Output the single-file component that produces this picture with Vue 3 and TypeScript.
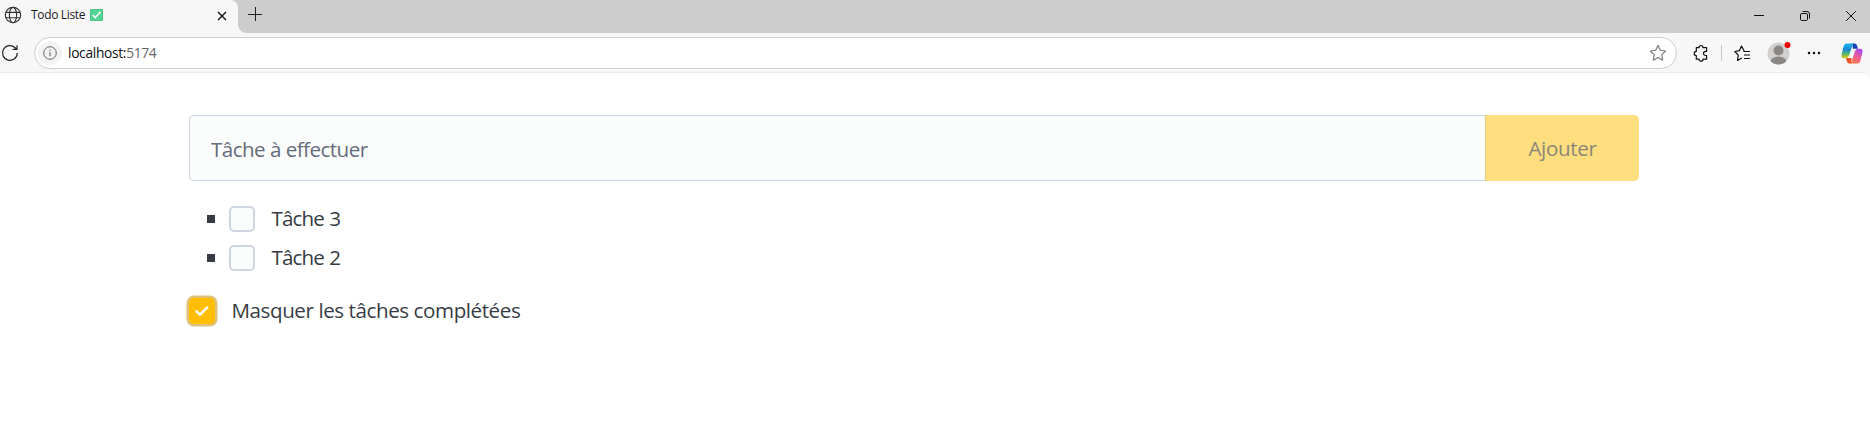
<script setup lang="ts">
import { computed, ref } from 'vue'

interface Todo {
  id: number
  title: string
  completed: boolean
}

const newTodo = ref('')
const hideCompleted = ref(true)
const todos = ref<Todo[]>([
  { id: 3, title: 'Tâche 3', completed: false },
  { id: 2, title: 'Tâche 2', completed: false },
  { id: 1, title: 'Tâche 1', completed: true },
])

const visibleTodos = computed(() =>
  hideCompleted.value ? todos.value.filter((t) => !t.completed) : todos.value,
)

function addTodo() {
  const title = newTodo.value.trim()
  if (!title) return
  todos.value.unshift({ id: Date.now(), title, completed: false })
  newTodo.value = ''
}
</script>

<template>
  <div class="browser">
    <header class="tabstrip">
      <div class="tab">
        <svg class="globe" width="18" height="18" viewBox="0 0 18 18" fill="none" stroke="#333" stroke-width="1.15">
          <circle cx="9" cy="9" r="7.7" />
          <ellipse cx="9" cy="9" rx="3.6" ry="7.7" />
          <path d="M2 6.3h14M2 11.7h14" />
        </svg>
        <span class="tab-title">Todo Liste</span>
        <svg class="tab-emoji" width="13" height="12" viewBox="0 0 13 12">
          <rect width="13" height="12" rx="1" fill="#49c586" />
          <rect x="1" y="1" width="11" height="10" fill="#55d394" />
          <path d="M2.8 6l2.5 2.7 5-5.6" fill="none" stroke="#fff" stroke-width="1.5" />
        </svg>
        <svg class="tab-close" width="10" height="10" viewBox="0 0 10 10" stroke="#111" stroke-width="1.4">
          <path d="M1 1l8 8M9 1L1 9" />
        </svg>
      </div>
      <div class="tab-curve"></div>
      <svg class="new-tab" width="14" height="14" viewBox="0 0 14 14" stroke="#222" stroke-width="1">
        <path d="M7.5 0v14M0 7.5h14" />
      </svg>
      <div class="window-buttons">
        <svg width="12" height="12" viewBox="0 0 12 12" fill="none" stroke="#111"><path d="M1 5.5h10" /></svg>
        <svg width="12" height="12" viewBox="0 0 12 12" fill="none" stroke="#111">
          <rect x="1.5" y="3.5" width="7" height="7" rx="1.3" />
          <path d="M3.5 1.5H8a2.5 2.5 0 0 1 2.500 2.500V8.500" />
        </svg>
        <svg width="12" height="12" viewBox="0 0 12 12" fill="none" stroke="#111"><path d="M1.200 1.200l9.600 9.600M10.800 1.200l-9.600 9.600" /></svg>
      </div>
    </header>

    <nav class="toolbar">
      <svg class="reload" width="18" height="18" viewBox="0 0 18 18" fill="none" stroke="#222" stroke-width="1.2">
        <path d="M16.300 9a7.400 7.400 0 1 1-2.200-5.300L16 5.400M16 1.200v4.200h-4.300" />
      </svg>
      <div class="address">
        <span class="info">
          <svg width="14" height="14" viewBox="0 0 14 14" fill="none" stroke="#666">
            <circle cx="7" cy="7" r="6.300" />
            <path d="M7 6v4.200M7 3.700v1.300" stroke-width="1.100" />
          </svg>
        </span>
        <span class="url">localhost:<span class="port">5174</span></span>
        <svg class="star" width="18" height="18" viewBox="0 0 18 18" fill="none" stroke="#777" stroke-width="1.100" stroke-linejoin="round">
          <path d="M9 1.300l2.300 5 5.400.7-4 3.700 1 5.500L9 13.500l-4.700 2.700 1-5.500-4-3.700 5.400-.7z" />
        </svg>
      </div>
      <svg class="puzzle" width="16" height="17" viewBox="0 0 16 17" fill="none" stroke="#111" stroke-width="1.200" stroke-linejoin="round">
        <path d="M3.300 2.700H6a2 2 0 0 1 4 0h3.600v3.600h-1a2.100 2.100 0 0 0 0 4.200h1v3.700H10a2 2 0 0 1-4 0H3.300v-3.600a2.100 2.100 0 0 1 0-4.200z" />
      </svg>
      <span class="divider"></span>
      <svg class="favorites" width="17" height="17" viewBox="0 0 17 17" fill="none" stroke="#111" stroke-width="1.200" stroke-linejoin="round">
        <path d="M10.300 6.200L7.500 1.100l-2 4.500L.8 6.500l3.500 3.700-.8 5.300 4.300-2.400" />
        <path d="M9.500 6.500H16M10 10h6M10 13.500h6" />
      </svg>
      <svg class="avatar" width="24" height="24" viewBox="0 0 24 24">
        <defs><clipPath id="avatar-clip"><circle cx="11.500" cy="12.500" r="11" /></clipPath></defs>
        <circle cx="11.500" cy="12.500" r="11" fill="#d2d0ce" />
        <g clip-path="url(#avatar-clip)" fill="#8a8886">
          <circle cx="11.500" cy="9.500" r="5" />
          <ellipse cx="11.500" cy="21" rx="8" ry="5.500" />
        </g>
        <circle cx="20.500" cy="4" r="3" fill="#e60000" />
      </svg>
      <svg class="more" width="14" height="4" viewBox="0 0 14 4" fill="#111">
        <circle cx="2" cy="2" r="1.250" /><circle cx="7" cy="2" r="1.250" /><circle cx="12" cy="2" r="1.250" />
      </svg>
      <svg class="copilot" width="22" height="21" viewBox="0 0 22 21">
        <defs>
          <linearGradient id="cp-left" x1="0" y1="0" x2="0" y2="1">
            <stop offset="0" stop-color="#19b5ee" /><stop offset=".4" stop-color="#1687dc" />
            <stop offset=".7" stop-color="#55b66d" /><stop offset="1" stop-color="#e9cb14" />
          </linearGradient>
          <linearGradient id="cp-right" x1=".8" y1="0" x2=".3" y2="1">
            <stop offset="0" stop-color="#a34af0" /><stop offset=".5" stop-color="#ec5a9b" />
            <stop offset="1" stop-color="#ff7f48" />
          </linearGradient>
        </defs>
        <path d="M11 .5h2.600q1.800 0 2.300 1.700l1.100 3.600h-5z" fill="#1741b8" />
        <path d="M10.500 20.500H8.300q-1.700 0-2.200-1.700l-1.200-3.700h5.500z" fill="#f05225" />
        <path d="M5.300.5h8q-1.400.4-2 2.300L8 12.800q-.8 2.400-3 2.400H2.800Q0 15.200.5 12L2.700 3Q3.500.5 5.300.5z" fill="url(#cp-left)" />
        <path d="M16.700 20.500h-8q1.400-.4 2-2.300L14 8.200q.8-2.400 3-2.400h2.200Q22 5.800 21.500 9l-2.200 9q-.8 2.500-2.600 2.500z" fill="url(#cp-right)" />
      </svg>
    </nav>

    <div class="viewport">
      <main class="container">
        <form class="group" @submit.prevent="addTodo">
          <input v-model="newTodo" class="field" type="text" placeholder="Tâche à effectuer" />
          <button class="submit" :disabled="!newTodo">Ajouter</button>
        </form>
        <ul class="todos">
          <li v-for="todo in visibleTodos" :key="todo.id">
            <label>
              <input v-model="todo.completed" class="check" type="checkbox" />
              <span class="task-text">{{ todo.title }}</span>
            </label>
          </li>
        </ul>
        <label class="hide">
          <span class="check-wrap">
            <input v-model="hideCompleted" class="check focused" type="checkbox" />
            <svg v-if="hideCompleted" class="mark" width="14" height="12" viewBox="0 0 14 12" fill="none" stroke="#fff" stroke-width="2.400" stroke-linecap="round" stroke-linejoin="round">
              <path d="M1.500 6.300l3.500 3.400 7.300-7.300" />
            </svg>
          </span>
          <span class="hide-text">Masquer les tâches complétées</span>
        </label>
      </main>
    </div>
  </div>
</template>

<style>
body {
  margin: 0;
  background: #f7f7f7;
}
</style>

<style scoped>
* {
  box-sizing: border-box;
}
svg {
  display: block;
  flex: none;
}
.browser {
  width: 100%;
  height: 443px;
  overflow: hidden;
  display: flex;
  flex-direction: column;
  background: #f7f7f7;
  font-family: "Open Sans", "Noto Sans", sans-serif;
  color: #373c44;
}
.tabstrip {
  height: 33px;
  flex: none;
  display: flex;
  background: #cdcdcd;
}
.tab {
  width: 238px;
  height: 33px;
  padding: 0 11px 3px 4px;
  display: flex;
  align-items: center;
  background: #f7f7f7;
  border-radius: 0 8px 0 0;
}
.tab-title {
  margin-left: 9px;
  width: 54px;
  font-size: 12px;
  letter-spacing: -0.34px;
  line-height: 16px;
  white-space: nowrap;
  color: #1b1b1b;
}
.tab-emoji {
  margin-left: 5px;
}
.tab-close {
  margin: 1px 0 0 auto;
}
.tab-curve {
  width: 8px;
  height: 8px;
  align-self: flex-end;
  background: radial-gradient(circle at 100% 0, #cdcdcd 7.500px, #f7f7f7 8px);
}
.new-tab {
  margin: 7px 0 0 2px;
}
.window-buttons {
  margin: 10px 13px 0 auto;
  display: flex;
  gap: 34px;
}
.toolbar {
  height: 39px;
  flex: none;
  display: flex;
  align-items: center;
  padding: 1px 7px 0 1px;
}
.address {
  flex: none;
  width: 1643px;
  height: 32px;
  margin: 0 16px 0 15px;
  padding: 0 9px 0 3px;
  display: flex;
  align-items: center;
  border: 1px solid #cfcfcf;
  border-radius: 16px;
  background: #fff;
}
.info {
  width: 24px;
  height: 24px;
  display: grid;
  place-items: center;
  border-radius: 50%;
  background: #f3f3f3;
}
.url {
  margin-left: 6px;
  font-size: 13.800px;
  letter-spacing: -0.33px;
  line-height: 20px;
  color: #111;
}
.port {
  color: #666;
}
.star {
  margin-left: auto;
}
.divider {
  width: 1px;
  height: 16px;
  margin: 0 12px;
  background: #c8c8c8;
}
.avatar {
  margin-left: 16px;
}
.more {
  margin-left: 16px;
}
.copilot {
  margin-left: auto;
}
.viewport {
  flex: 1;
  border-top: 1px solid #e9e9e9;
  border-radius: 0 9px 0 0;
  background: #fff;
}
.container {
  width: 1450px;
  margin-left: 189px;
  padding-top: 42px;
}
.group {
  display: flex;
  height: 66px;
}
.field {
  flex: 1;
  height: 66px;
  padding: 2px 21px 0;
  border: 1px solid #cfd5e2;
  border-right: 0;
  border-radius: 5px 0 0 5px;
  outline: none;
  background: #fbfcfc;
  font-family: inherit;
  font-size: 20.600px;
  letter-spacing: -0.54px;
  color: #373c44;
}
.field::placeholder {
  color: #646b79;
  opacity: 1;
}
.submit {
  width: 154px;
  padding: 0;
  border: 0;
  border-left: 1px solid #e2ca82;
  border-radius: 0 5px 5px 0;
  background: #ffde80;
  font-family: inherit;
  font-size: 20.600px;
  letter-spacing: -0.35px;
  color: #8a8778;
}
.todos {
  margin: 25px 0 0;
  padding: 0 0 0 18px;
  list-style: none;
  display: flex;
  flex-direction: column;
  gap: 13px;
}
.todos li {
  height: 26px;
  display: flex;
  align-items: center;
}
.todos li::before {
  content: "";
  width: 8px;
  height: 8px;
  margin-right: 14px;
  background: #373c44;
}
label {
  display: flex;
  align-items: center;
  font-size: 20.600px;
  line-height: 24px;
}
.check {
  appearance: none;
  display: block;
  width: 26px;
  height: 26px;
  margin: 0;
  border: 2px solid #cfd5e2;
  border-radius: 5px;
  background: #fbfcfc;
}
.task-text {
  margin: 0 0 2px 16.500px;
  letter-spacing: -0.9px;
  word-spacing: 1px;
}
.hide {
  width: max-content;
  margin-top: 27px;
}
.check-wrap {
  display: grid;
  place-items: center;
}
.check-wrap > * {
  grid-area: 1 / 1;
}
.check:checked {
  border-color: #ffbf00;
  background: #ffbf00;
}
.focused {
  box-shadow: 0 0 0 2.500px #dfc27a;
}
.mark {
  z-index: 1;
  pointer-events: none;
}
.hide-text {
  margin: 0 0 2px 16.500px;
  letter-spacing: -0.43px;
}
</style>
